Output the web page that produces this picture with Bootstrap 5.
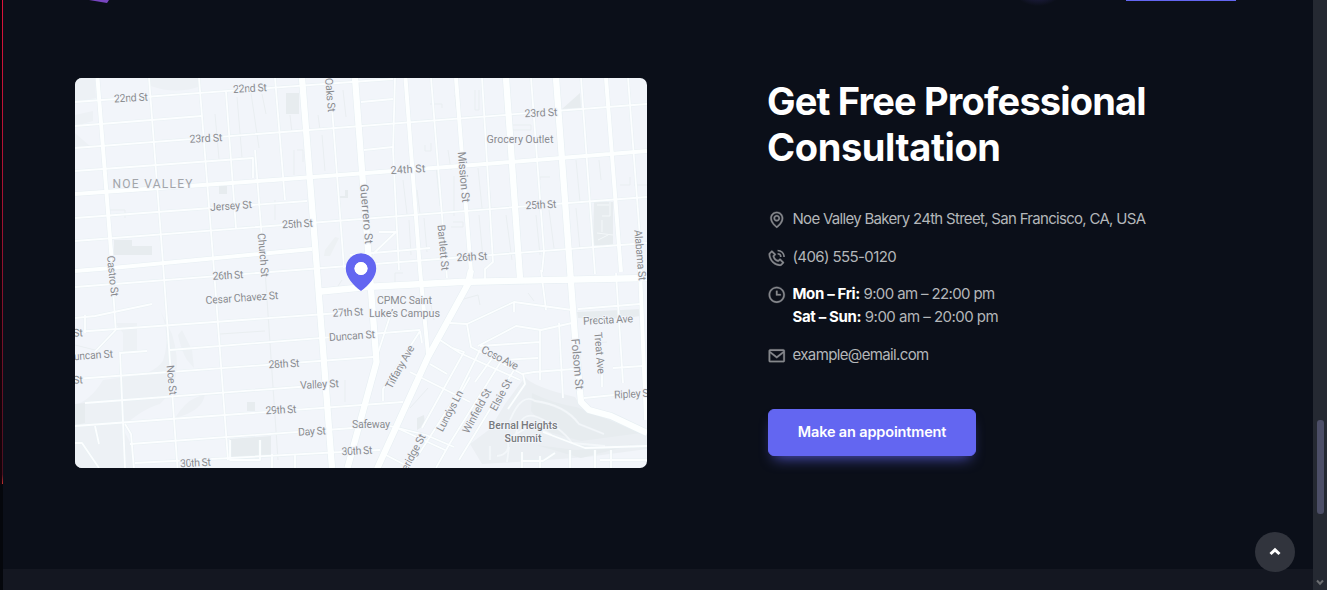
<!DOCTYPE html>
<html lang="en">
<head>
<meta charset="utf-8">
<meta name="viewport" content="width=device-width, initial-scale=1">
<title>Get Free Professional Consultation</title>
<link href="https://cdn.jsdelivr.net/npm/bootstrap@5.3.0/dist/css/bootstrap.min.css" rel="stylesheet">
<style>
body{background:#0b0f19;color:#b4b7ba;font-family:Inter,sans-serif;font-size:15px;line-height:23px}
.edge{width:3px;background:linear-gradient(#080308,#160309 484px,#05070c 485px)}
.edge-line{width:1px;height:484px;margin-left:2px;background:linear-gradient(#dc143c,#a01232 45%,#4a1020 98%,#c03030)}
.top-strip{height:78px}
.cta-edge{width:110px;height:1px;margin-right:77px;background:#6366f1}
.logo-edge{left:84px;top:0}
.glow{left:1013px;top:-30px;width:50px;height:36px;background:radial-gradient(closest-side,#302c67,transparent)}
.contact{height:491px;padding-left:72px}
.map-box{width:572px;height:390px;border-radius:7px}
.info{margin-left:121px;width:450px}
h2{font-size:38px;line-height:46px;font-weight:700;color:#fff;letter-spacing:-.82px;margin:0 0 37px -1px}
.h-second{letter-spacing:-.38px}
.info li{margin-bottom:15px}
.info li.hours{margin-top:-1px}
.info li svg{width:19.500px;height:19.500px;margin:3px 6px 0 -1px;fill:#85878c;stroke:#85878c;stroke-width:.3px;flex:none}
.info li span{letter-spacing:-.63px}
.info .t-address{letter-spacing:-.7px}
.info .t-phone{letter-spacing:-.6px}
.info .t-sun{letter-spacing:-.52px}
.info b{color:#fff;font-weight:700;letter-spacing:-.35px}
.btn-cta{--bs-btn-bg:#6366f1;--bs-btn-color:#fff;--bs-btn-border-color:#6366f1;--bs-btn-hover-bg:#5457e8;--bs-btn-hover-color:#fff;width:208px;height:47px;border-radius:6px;font-size:14.5px;font-weight:600;margin-top:28px;letter-spacing:-.15px;box-shadow:0 8px 14px -6px rgba(99,102,241,.75);padding:0 0 2px}
.foot{background:#141721}
.scroll-track{width:14px;background:#252932}
.thumb{width:7px;height:94px;margin:420px 0 0 4px;border-radius:3px;background:#4c4e67}
.to-top{left:1255px;top:532px;width:40px;height:40px;background:#31343d}
.map-box text{font-family:Roboto,sans-serif;font-size:10.8px;fill:#8a8c90;text-anchor:middle;dominant-baseline:central;stroke:#f2f5fa;stroke-width:2px;paint-order:stroke}
</style>
</head>
<body class="vh-100 overflow-hidden d-flex position-relative">
<div class="edge flex-shrink-0"><div class="edge-line"></div></div>
<main class="flex-grow-1 d-flex flex-column overflow-hidden">
  <div class="top-strip flex-shrink-0 d-flex"><div class="cta-edge ms-auto"></div></div>
  <section class="contact d-flex flex-shrink-0">
    <div class="map-box overflow-hidden flex-shrink-0">
    <svg width="572" height="390" viewBox="75 78 572 390">
      <rect x="75" y="78" width="572" height="390" fill="#f2f5fa"/>
      <!-- parks and terrain -->
      <g fill="#edf1f5">
        <path d="M75 78h20l1 20-21 4zM149 78h50l2 8q-25 9-50 0zM75 115l18-4v10l-18 5zM75 133l16 14-16 2z"/>
        <path d="M158 306q14 26 5 55-10 13-30 15l-30 4q-12 20-28 25v63h60l-4-24-9-17q22-19 38-23 26-24 12-70zM182 330l10 20 2 18-7-8q-6-10-9-25z"/>
        <path d="M205 394q-2 17-30 24 10-16 20-20zM115 323h22v28h-14v-18z"/>
      </g>
      <path d="M525 377q8 10 50 20l6 10 66 28v14l-60 8-55 4-50 3-12-20 20-15 15-25z" fill="#ebeff3"/>
      <g fill="#e7ecef">
        <path d="M114 240h18v6h20v9h-38zM219 186h8v8h-8zM286 93h13v21h-13zM594 202h19v43h-20zM562 109l18-16 1 15zM75 404l10-1v20l-10 2zM230 439l41-3v20l-41 4zM247 402h8v9h-8zM577 312l66-3-2 7q-30 5-63 2zM532 393q20 10 44 14l65 26-60 8-32-9-18-21zM417 418l7-3 1 10-8 5zM536 445l40 5 60-6-55 14zM345 190h3v8h-8v-2h5z"/>
      </g>
      <path d="M325 250l10-13 4 1-9 18h-6z" fill="#edf1f4"/>
      <!-- alleys -->
      <g fill="none" stroke="#e9eef1" stroke-width="1">
        <path d="M215 114l4 45M237 97l5 60M251 93l8 55M290 115l2 18M318 115l2 15M322 135l3 36M343 90l3 27M294 150v25M297 150h6v12M403 180l4 34M417 190l3 24M436 166l4 40M448 150l3 20M409 220l2 35M424 218l3 34M475 90v20h4V90M478 168l4 40M488 170l3 38M513 130h18v-5h-20M576 160l4 42M599 160l2 20M576 208l4 42M620 185h10v-8M634 185h13M479 215l4 44M506 215l6 45M536 215l4 40M549 210l5 38M565 205l4 40M453 222h10v5h-12M110 210h15v8M262 94l4 20M275 200v20M455 95l2 20M454 176v40M425 145v6h6v-8M430 104h12v4M550 177h-10v3"/>
        <path d="M265 270l13 190M220 334l45-3M460 300l18-5 2 10M528 293l6 8M430 300l4 20M345 380v22M75 345l20 5M395 285v-12h8M338 286l4-6M595 343l12-1M410 408l18-20"/>
      </g>
      <path d="M610 202v14h-8M597 205h12M597 233l16 2M598 240l10-5M602 220v12" fill="none" stroke="#f4f8fa"/>
      <!-- streets, drawn with a faint casing below the white -->
      <defs><g id="lanes" fill="none" stroke-linejoin="round">
        <path d="M111 257l4.700 73-21 22M149 78l14.500 192 14 198M199 78l15 192 14 190M226 92l10 136M255 150l7 90M275 78l10 122M332 108l12 160M395 78l-2 72 6 120M431 78l16 200M482 78l11 184-8 7v12M531 78l13 174-2 20M581 78l14 196M628 78l12 160M120 352l5 116M125 424l6 10 3 35M95 426l4 18M75 443h7l17 25M85 315v18"/>
        <path d="M75 102l318-23M75 126l127-10M75 148l572-44M75 171l178-13v20M75 218l232-17M75 241l572-44M75 287l572-44M75 318l20-2 57-12M75 332l265-19M170 350l250-20M120 353l27-2M75 379l298-22M85 403l240-18M75 426l328-24M130 444l223-16M135 463l245-13M361 102l32-3M364 150l29-3M350 255l80-7M379 232h17l-23 22M272 454v14M295 455v13M230 440v20h30v-20"/>
        <path d="M393 307l-18 55M420 331l-37 58v12M420 331l2 12M440 340l20 13 60 27M430 364l17 10M410 372l60 30M395 427l50 23M384 454l25 13M454 447l-28-12-40-10M450 323l17 1 4 23 17 9 34 18 12-2 40-3M467 324l47-22 58 8M478 346l38-20 25 4 31-7M514 302v10M480 346l60-4M500 360l38-2M540 330v50M450 347l14 5-42 76M480 350l-20 40-45 70M500 363l-50 80-14 25M514 370l-55 90M523 374l2 10-17 25M470 377l-20 35M493 357l-18 25M541 270l5 40M559 323l4 75M616 273l7 110M578 309l62-5M584 398l50-5M613 368l30-2M602 372v15M543 432l42 16 62-2M521 461h22l12-8M611 450v18M570 450v18M595 450v18M522 468v-16M540 468v-12M600 460h47"/>
        <path d="M510 420q12-28 25-19 30 4 44 23l25 10M515 440q4-30 22-23 24 10 35 26l33 3M497 456q15-2 10-17l25-14 20 10M490 460v-14M507 462l2-15" stroke-opacity=".55"/>
      </g>
      <g id="roads" fill="none" stroke-linejoin="round"><path d="M97.500 78l14 179M75 194l198-14 187-14 187-15M75 271l37-3 200-19M405.500 78l14.500 192 8 84M456 78l15 194M606 78l15 194M640 270l6 150"/></g>
      <g id="mains" fill="none" stroke-linejoin="round"><path d="M302 78l15 192 15 198M355 78l13 172 8.500 112-29 106M316 292l50-5 94-5 187-4M506 78l14 200M556 78l19 259 6 65 8 8 22 6 36 17M471 270l-3 14-40 73-51 112"/></g></defs>
      <use href="#lanes" stroke="#e9f1f4" stroke-width="2.900"/><use href="#roads" stroke="#e7eff3" stroke-width="5"/><use href="#mains" stroke="#e7eff3" stroke-width="7.500"/>
      <use href="#lanes" stroke="#fcfeff" stroke-width="1.800"/><use href="#roads" stroke="#fdffff" stroke-width="4"/><use href="#mains" stroke="#fdffff" stroke-width="6.300"/>
      <g>
        <text transform="translate(131 98) rotate(-3)" textLength="34">22nd St</text>
        <text transform="translate(250 88.500) rotate(-3)" textLength="34">22nd St</text>
        <text transform="translate(206 138.500) rotate(-3)" textLength="33">23rd St</text>
        <text transform="translate(541 113) rotate(-3)" textLength="33">23rd St</text>
        <text transform="translate(520 139.500)" textLength="67">Grocery Outlet</text>
        <text transform="translate(408 169.500) rotate(-3)" textLength="35">24th St</text>
        <text transform="translate(152.500 184)" textLength="80" style="font-size:12px;fill:#a2a5aa">NOE VALLEY</text>
        <text transform="translate(231 206) rotate(-4)" textLength="42">Jersey St</text>
        <text transform="translate(297.500 224) rotate(-3)" textLength="31">25th St</text>
        <text transform="translate(541 205) rotate(-3)" textLength="31">25th St</text>
        <text transform="translate(472 257) rotate(-3)" textLength="31">26th St</text>
        <text transform="translate(228 275.500) rotate(-3)" textLength="31">26th St</text>
        <text transform="translate(242 298) rotate(-4)" textLength="73">Cesar Chavez St</text>
        <text transform="translate(348 312.500) rotate(-3)" textLength="31">27th St</text>
        <text transform="translate(404.500 300.500)" textLength="55">CPMC Saint</text>
        <text transform="translate(404.500 313.500)" textLength="71">Luke’s Campus</text>
        <text transform="translate(352 336) rotate(-4)" textLength="46">Duncan St</text>
        <text transform="translate(284 364) rotate(-3)" textLength="31">28th St</text>
        <text transform="translate(319.500 384.500) rotate(-3)" textLength="39">Valley St</text>
        <text transform="translate(281 410) rotate(-3)" textLength="31">29th St</text>
        <text transform="translate(312 431.500) rotate(-3)" textLength="28">Day St</text>
        <text transform="translate(371 424)" textLength="38">Safeway</text>
        <text transform="translate(357 451) rotate(-3)" textLength="31">30th St</text>
        <text transform="translate(195.500 463) rotate(-3)" textLength="31">30th St</text>
        <text transform="translate(90 355.500) rotate(-4)" textLength="46">Duncan St</text>
        <text transform="translate(78 333) rotate(-3)">St</text>
        <text transform="translate(78 380) rotate(-3)">St</text>
        <text transform="translate(112.500 276) rotate(84)" textLength="41">Castro St</text>
        <text transform="translate(171.500 380) rotate(84)" textLength="30">Noe St</text>
        <text transform="translate(263 255) rotate(85)" textLength="44">Church St</text>
        <text transform="translate(330 95) rotate(85)" textLength="34">Oaks St</text>
        <text transform="translate(366.500 214) rotate(85)" textLength="60" style="font-size:11.500px">Guerrero St</text>
        <text transform="translate(443 247.500) rotate(85)" textLength="46">Bartlett St</text>
        <text transform="translate(463.500 177) rotate(85)" textLength="51" style="font-size:11.300px">Mission St</text>
        <text transform="translate(640 255) rotate(85)" textLength="51">Alabama St</text>
        <text transform="translate(577.500 364) rotate(85)" textLength="51" style="font-size:11.500px">Folsom St</text>
        <text transform="translate(599.500 353) rotate(85)" textLength="42">Treat Ave</text>
        <text transform="translate(608 320) rotate(-3)" textLength="50">Precita Ave</text>
        <text transform="translate(633 394) rotate(-3)" textLength="38">Ripley St</text>
        <text transform="translate(500 358) rotate(27)" textLength="40">Coso Ave</text>
        <text transform="translate(400 367) rotate(-61)" textLength="48">Tiffany Ave</text>
        <text transform="translate(450 411) rotate(-62)" textLength="45">Lundys Ln</text>
        <text transform="translate(477 411) rotate(-62)" textLength="49">Winfield St</text>
        <text transform="translate(501 395) rotate(-62)" textLength="34">Elsie St</text>
        <text transform="translate(410 459) rotate(-62)" textLength="55">Coleridge St</text>
        <g style="font-weight:500"><text transform="translate(523 425)" textLength="69" style="fill:#77797d">Bernal Heights</text>
        <text transform="translate(523 438)" textLength="37" style="fill:#77797d">Summit</text></g>
      </g>
      <path d="M361 253.300a15.200 15.200 0 0 1 15.200 15.200c0 8.500-7.200 16.500-15.200 22.500-8-6-15.200-14-15.200-22.500A15.200 15.200 0 0 1 361 253.300zm0 8.700a6.500 6.500 0 1 0 0 13 6.500 6.500 0 0 0 0-13z" fill="#6366f1" fill-rule="evenodd"/>
      <circle cx="361" cy="268.500" r="6.500" fill="#fff"/>
    </svg>
    </div>
    <div class="info flex-shrink-0">
      <h2>Get Free Professional<br><span class="h-second">Consultation</span></h2>
      <ul class="list-unstyled mb-0 text-nowrap">
        <li class="d-flex"><svg viewBox="0 0 24 24"><path d="M12 14c2.206 0 4-1.794 4-4s-1.794-4-4-4-4 1.794-4 4 1.794 4 4 4zm0-6c1.103 0 2 .897 2 2s-.897 2-2 2-2-.897-2-2 .897-2 2-2z"/><path d="M11.420 21.814a.998.998 0 0 0 1.160 0C12.884 21.599 20.029 16.440 20 10c0-4.411-3.589-8-8-8S4 5.589 4 9.995c-.029 6.445 7.116 11.604 7.420 11.819zM12 4c3.309 0 6 2.691 6 6.005.021 4.438-4.388 8.423-6 9.730-1.611-1.308-6.021-5.294-6-9.735 0-3.309 2.691-6 6-6z"/></svg><span class="t-address">Noe Valley Bakery 24th Street, San Francisco, CA, USA</span></li>
        <li class="d-flex"><svg viewBox="0 0 24 24"><path d="M16.712 13.288a.999.999 0 0 0-1.414 0l-1.594 1.594c-.739-.22-2.118-.72-2.992-1.594s-1.374-2.253-1.594-2.992l1.594-1.594a.999.999 0 0 0 0-1.414l-4-4a.999.999 0 0 0-1.414 0L2.586 6c-.38.38-.594.902-.586 1.435.023 1.424.4 6.370 4.298 10.268s8.844 4.274 10.269 4.298h.028c.528 0 1.027-.208 1.405-.586l2.712-2.712a.999.999 0 0 0 0-1.414l-4-4.001zM16.583 20c-1.248-.021-5.518-.356-8.873-3.712-3.366-3.366-3.692-7.651-3.712-8.874L6 5.414 8.586 8 7.293 9.293a1 1 0 0 0-.272.912c.024.115.611 2.842 2.271 4.502s4.387 2.247 4.502 2.271a.991.991 0 0 0 .912-.271L16 15.414 18.586 18l-2.003 2z"/><path d="M13 3c4.600 0 8 3.400 8 8M13 7c2.500 0 4 1.500 4 4" fill="none" stroke="#85878c" stroke-width="2"/></svg><span class="t-phone">(406) 555-0120</span></li>
        <li class="d-flex hours"><svg viewBox="0 0 24 24"><path d="M12 2C6.486 2 2 6.486 2 12s4.486 10 10 10 10-4.486 10-10S17.514 2 12 2zm0 18c-4.411 0-8-3.589-8-8s3.589-8 8-8 8 3.589 8 8-3.589 8-8 8z"/><path d="M13 7h-2v6h6v-2h-4z"/></svg><div><span><b>Mon – Fri:</b> 9:00 am – 22:00 pm</span><br><span class="t-sun"><b>Sat – Sun:</b> 9:00 am – 20:00 pm</span></div></li>
        <li class="d-flex"><svg viewBox="0 0 24 24"><path d="M20 4H4c-1.103 0-2 .897-2 2v12c0 1.103.897 2 2 2h16c1.103 0 2-.897 2-2V6c0-1.103-.897-2-2-2zm0 2v.511l-8 6.223-8-6.222V6h16zM4 18V9.044l7.386 5.745a.994.994 0 0 0 1.228 0L20 9.044 20.002 18H4z"/></svg><span>example@email.com</span></li>
      </ul>
      <button class="btn btn-cta" type="button">Make an appointment</button>
    </div>
  </section>
  <footer class="foot flex-grow-1"></footer>
</main>
<aside class="scroll-track flex-shrink-0 d-flex flex-column"><div class="thumb"></div>
<svg class="mt-auto mx-auto mb-1" width="8" height="7" viewBox="0 0 8 7"><path d="M1 1.500l3 3.200 3-3.200" fill="none" stroke="#6c6e72" stroke-width="2"/></svg></aside>
<svg class="logo-edge position-absolute" width="26" height="4" viewBox="0 0 26 4"><path d="M5 0h20l-2 3z" fill="#7845c0"/></svg>
<div class="glow position-absolute"></div>
<a href="#" class="to-top position-absolute rounded-circle d-flex align-items-center justify-content-center" aria-label="Back to top"><svg width="14" height="10" viewBox="0 0 14 10"><path d="M2.500 7L7 2.800 11.500 7" fill="none" stroke="#fff" stroke-width="3"/></svg></a>
<script src="https://cdn.jsdelivr.net/npm/bootstrap@5.3.0/dist/js/bootstrap.bundle.min.js"></script>
</body>
</html>
